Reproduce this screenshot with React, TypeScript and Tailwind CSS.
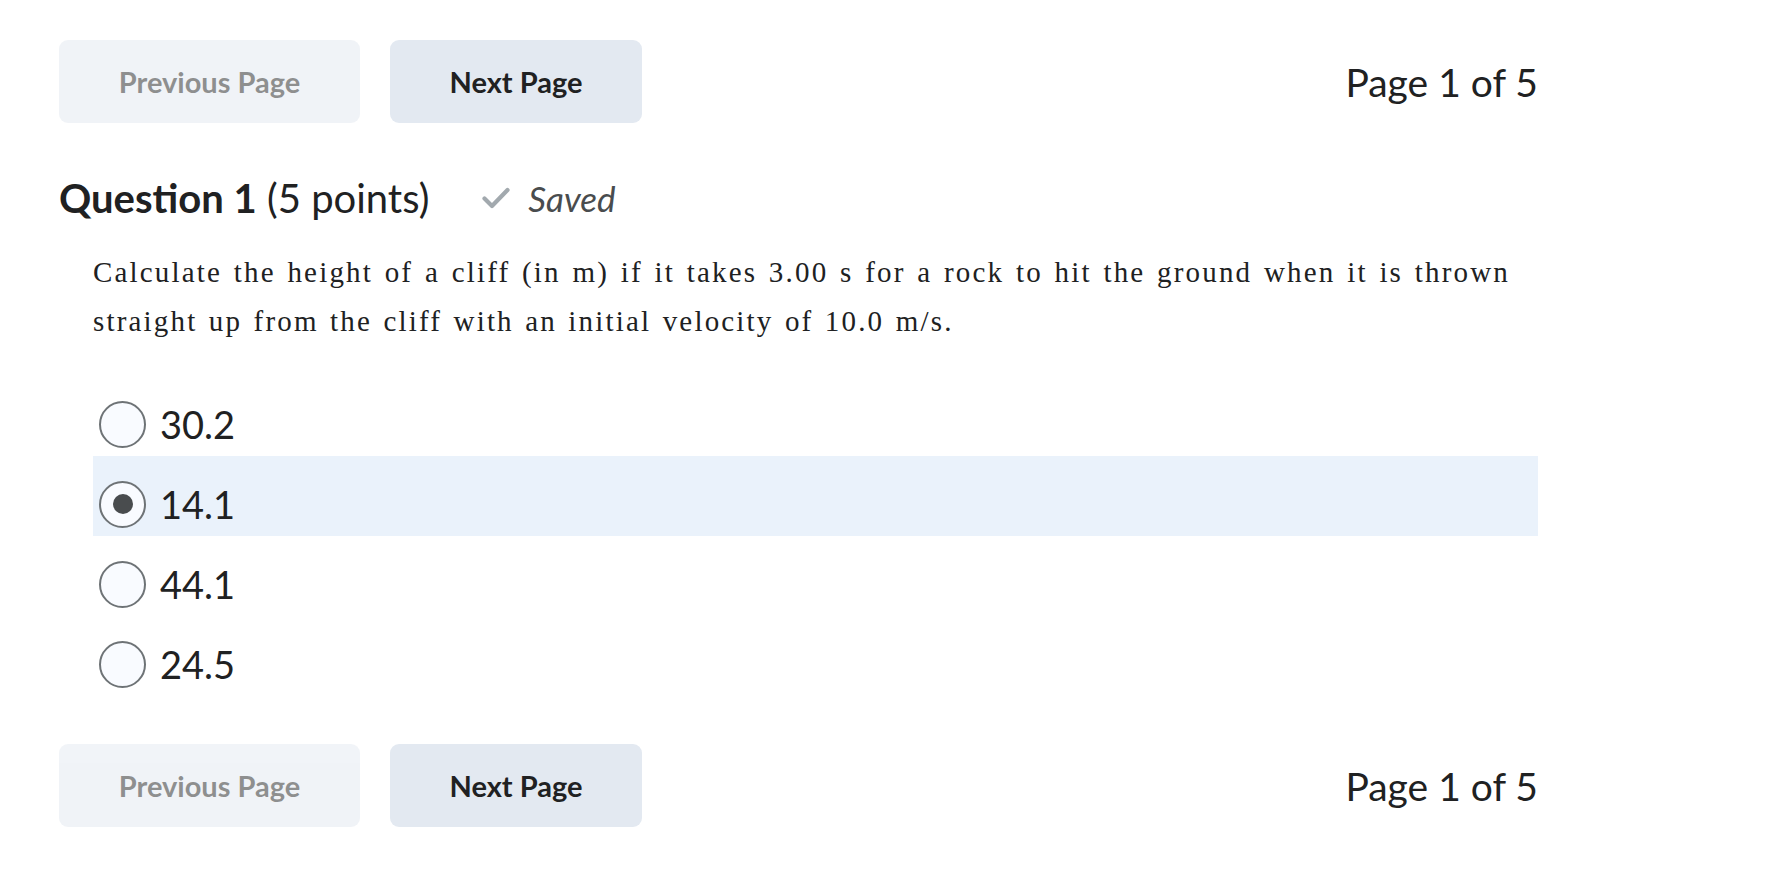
import React from "react";

const lato = { fontFamily: "Lato, 'Noto Sans', sans-serif" };

function PageNav() {
  return (
    <div className="flex h-[83px] items-center justify-between">
      <div className="flex gap-[30px]">
        <button
          disabled
          className="h-[83px] w-[301px] rounded-[9px] bg-[#e3e9f1] text-[29px] font-bold text-[#202122] opacity-50"
        >
          Previous Page
        </button>
        <button className="h-[83px] w-[252px] rounded-[9px] bg-[#e3e9f1] text-[29px] font-bold text-[#202122]">
          Next Page
        </button>
      </div>
      <div className="pt-[2px] text-[39px] leading-none text-[#202122]">Page 1 of 5</div>
    </div>
  );
}

function Radio({ checked }: { checked?: boolean }) {
  return (
    <span className="flex h-[47px] w-[47px] shrink-0 items-center justify-center rounded-full border-2 border-[#6e7376] bg-[#f9fbff]">
      {checked && <span className="h-[20px] w-[20px] rounded-full bg-[#494c4e]" />}
    </span>
  );
}

export default function App() {
  const options = ["30.2", "14.1", "44.1", "24.5"];
  const selected = "14.1";

  return (
    <div className="min-h-screen bg-white pl-[59px] pt-[40px]" style={lato}>
      <div className="w-[1479px]">
        <PageNav />

        <div className="mt-[51px] flex h-[48px] items-center">
          <h2 className="text-[40px] leading-none text-[#202122]">
            <span className="font-bold">Question 1</span> (5 points)
          </h2>
          <div className="ml-[53px] flex items-center gap-[18px]">
            <svg width="28" height="22" viewBox="0 0 28 22" fill="none">
              <path
                d="M2.5 11.5 L10 19 L25.5 3"
                stroke="#a2a9ae"
                strokeWidth="4.2"
                strokeLinecap="round"
                strokeLinejoin="round"
              />
            </svg>
            <span className="text-[35px] italic leading-none text-[#494c4e]">Saved</span>
          </div>
        </div>

        <div
          className="mt-[26px] w-[1417px] pl-[34px] text-[29px] leading-[49px] tracking-[0.075em] text-[#202122]"
          style={{ fontFamily: "'Liberation Serif', 'DejaVu Serif', serif", boxSizing: "content-box" }}
        >
          <span className="block [text-align-last:justify]">
            Calculate the height of a cliff (in m) if it takes 3.00 s for a rock to hit the ground when it is thrown
          </span>
          <span className="block [word-spacing:2px]">
            straight up from the cliff with an initial velocity of 10.0 m/s.
          </span>
        </div>

        <div className="ml-[34px] mt-[30px] flex flex-col">
          {options.map((o) => (
            <label
              key={o}
              className={
                "flex h-[80px] items-center gap-[14px] pl-[6px] pt-[16px] " +
                (o === selected ? "bg-[#eaf2fb]" : "")
              }
            >
              <Radio checked={o === selected} />
              <span className="text-[38px] leading-none text-[#202122]">{o}</span>
            </label>
          ))}
        </div>

        <div className="mt-[48px]">
          <PageNav />
        </div>
      </div>
    </div>
  );
}
